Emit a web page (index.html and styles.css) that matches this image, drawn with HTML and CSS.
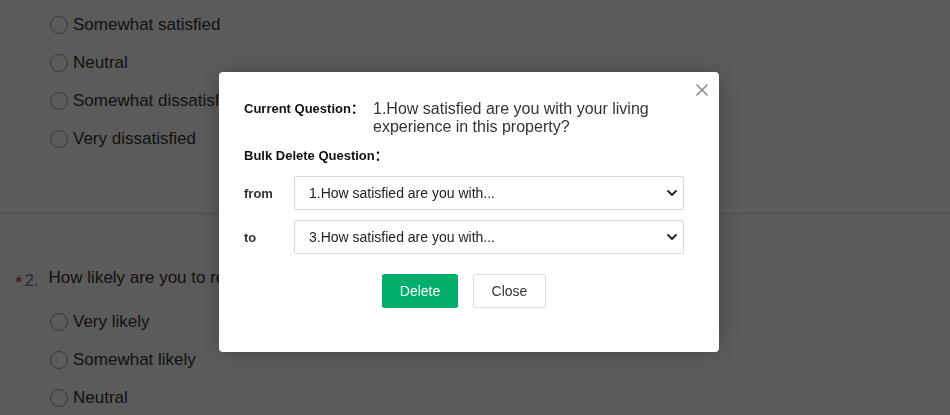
FILE: index.html
```html
<!DOCTYPE html>
<html>
<head>
<meta charset="utf-8">
<link rel="stylesheet" href="styles.css">
</head>
<body>
<div class="survey">
  <div class="section first">
    <ul class="options">
      <li class="option"><span class="radio"></span>Somewhat satisfied</li>
      <li class="option"><span class="radio"></span>Neutral</li>
      <li class="option"><span class="radio"></span>Somewhat dissatisfied</li>
      <li class="option"><span class="radio"></span>Very dissatisfied</li>
    </ul>
  </div>
  <div class="section second">
    <div class="question"><span class="req">*</span><span class="num">2.</span><span class="qtext">How likely are you to recommend this property to a friend?</span></div>
    <ul class="options">
      <li class="option"><span class="radio"></span>Very likely</li>
      <li class="option"><span class="radio"></span>Somewhat likely</li>
      <li class="option"><span class="radio"></span>Neutral</li>
    </ul>
  </div>
</div>

<div class="overlay"></div>

<div class="modal">
  <button class="close-x" aria-label="close">
    <svg width="12" height="12" viewBox="0 0 12 12"><path d="M1 1 L11 11 M11 1 L1 11" stroke="#8c8c8c" stroke-width="1.6" fill="none" stroke-linecap="round"/></svg>
  </button>
  <div class="current">
    <span class="label-strong">Current Question<span class="colon">：</span></span>
    <span class="current-text">1.How satisfied are you with your living experience in this property?</span>
  </div>
  <div class="bulk-title label-strong">Bulk Delete Question<span class="colon">：</span></div>
  <div class="form-row">
    <span class="row-label">from</span>
    <select class="sel"><option>1.How satisfied are you with...</option></select>
  </div>
  <div class="form-row">
    <span class="row-label">to</span>
    <select class="sel"><option>3.How satisfied are you with...</option></select>
  </div>
  <div class="actions">
    <button class="btn btn-primary">Delete</button>
    <button class="btn btn-default">Close</button>
  </div>
</div>
</body>
</html>
```

FILE: styles.css
```css
html, body {
  margin: 0;
  padding: 0;
  background: #ffffff;
  font-family: "Liberation Sans", Arial, Helvetica, sans-serif;
  color: #333;
  overflow: hidden;
  height: 415px;
}

.survey {
  width: 950px;
}

.options {
  list-style: none;
  margin: 0;
  padding: 0 0 0 50px;
}

.option {
  height: 38px;
  display: flex;
  align-items: center;
  font-size: 17px;
  color: #333;
}

.radio {
  width: 16px;
  height: 16px;
  border: 1px solid #9a9a9a;
  border-radius: 50%;
  margin-right: 5px;
  background: #fff;
}

.section.first {
  padding-top: 6px;
  padding-bottom: 55px;
  border-bottom: 1px solid #dcdcdc;
}

.section.second {
  padding-top: 51px;
}

.question {
  display: flex;
  align-items: center;
  height: 26px;
  margin-bottom: 12px;
  padding-left: 15px;
  font-size: 17px;
  color: #333;
}

.req {
  color: #d42020;
  font-size: 19px;
  margin-right: 2px;
  position: relative;
  top: 5px;
}

.num {
  margin-right: 10px;
  color: #777;
  position: relative;
  top: 3px;
}

.qtext {
  white-space: nowrap;
}

.overlay {
  position: fixed;
  inset: 0;
  background: rgba(0, 0, 0, 0.643);
}

.modal {
  position: fixed;
  left: 219px;
  top: 72px;
  width: 500px;
  height: 280px;
  box-sizing: border-box;
  background: #fff;
  border-radius: 4px;
  box-shadow: 0 0 24px rgba(0, 0, 0, 0.25);
  padding: 28px 35px 0 25px;
}

.close-x {
  position: absolute;
  top: 12px;
  right: 11px;
  width: 12px;
  height: 12px;
  padding: 0;
  border: 0;
  background: transparent;
  display: flex;
}

.current {
  display: flex;
  align-items: flex-start;
}

.label-strong {
  font-size: 13px;
  font-weight: bold;
  color: #111;
  line-height: 18px;
  height: 18px;
  white-space: nowrap;
  overflow: visible;
}

.colon {
  font-family: "Noto Sans CJK SC", sans-serif;
  font-weight: bold;
  line-height: 0;
}

.current .label-strong {
  width: 129px;
}

.current-text {
  font-size: 16px;
  line-height: 18px;
  color: #333;
  width: 300px;
}

.bulk-title {
  margin-top: 11px;
}

.form-row {
  display: flex;
  align-items: center;
  margin-top: 11px;
}

.form-row + .form-row {
  margin-top: 10px;
}

.row-label {
  width: 50px;
  font-size: 13px;
  font-weight: bold;
  color: #333;
}

.sel {
  width: 390px;
  height: 34px;
  box-sizing: border-box;
  border: 1px solid #d9d9d9;
  border-radius: 2px;
  background: #fff url("data:image/svg+xml;utf8,<svg xmlns='http://www.w3.org/2000/svg' width='10' height='6' viewBox='0 0 10 6'><path d='M1 1 L5 5 L9 1' stroke='%23222' stroke-width='1.8' fill='none' stroke-linecap='round' stroke-linejoin='round'/></svg>") no-repeat right 6px center;
  -webkit-appearance: none;
  appearance: none;
  padding: 0 0 0 14px;
  font-family: "Liberation Sans", Arial, Helvetica, sans-serif;
  font-size: 14px;
  color: #222;
  outline: none;
}

.actions {
  display: flex;
  gap: 15px;
  margin-top: 20px;
  padding-left: 138px;
}

.btn {
  height: 34px;
  box-sizing: border-box;
  font-family: "Liberation Sans", Arial, Helvetica, sans-serif;
  font-size: 14px;
  border-radius: 2px;
  padding: 0;
  cursor: pointer;
}

.btn-primary {
  width: 76px;
  background: #00ae6c;
  border: 1px solid #00ae6c;
  color: #fff;
}

.btn-default {
  width: 73px;
  background: #fff;
  border: 1px solid #dcdcdc;
  color: #333;
}
```
